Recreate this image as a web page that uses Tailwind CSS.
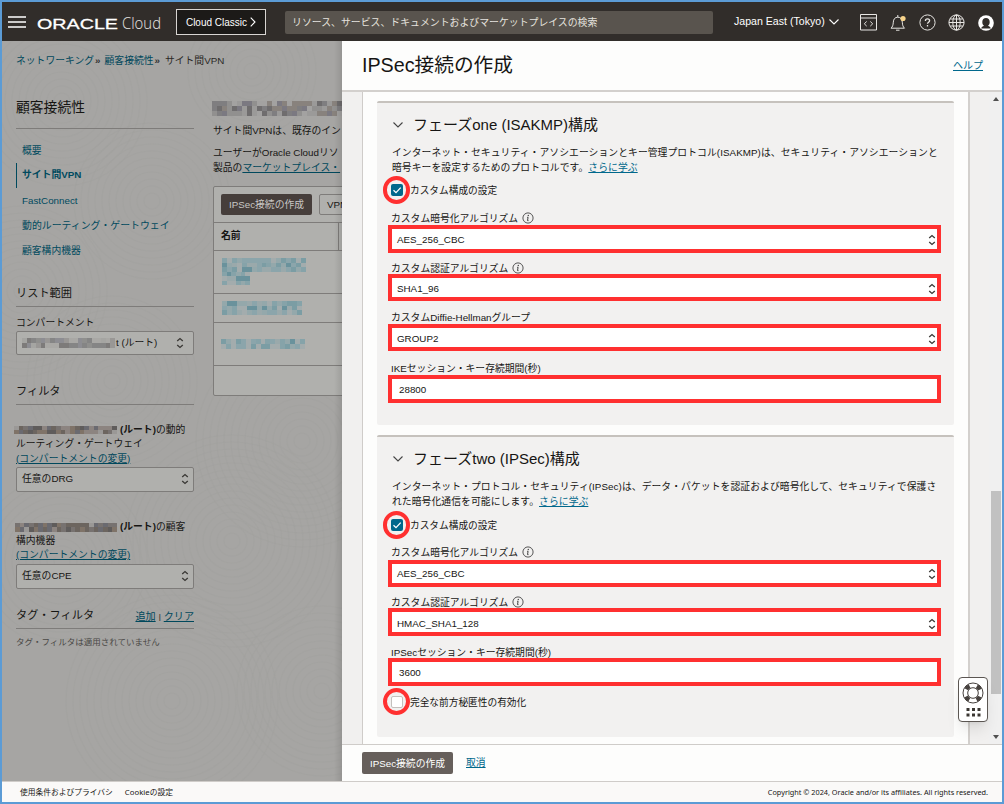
<!DOCTYPE html>
<html lang="ja">

<head>
    <meta charset="UTF-8">
    <meta name="viewport" content="width=device-width, initial-scale=1.0">
    <title>IPSec接続の作成 - Oracle Cloud</title>
    <script src="https://cdn.jsdelivr.net/npm/@tailwindcss/browser@4"></script>
</head>

<body class="w-[1004px] h-[804px] overflow-hidden border-2 border-[#5b9bd5] bg-white font-['Liberation_Sans','Noto_Sans_CJK_JP',sans-serif] text-[9.8px] leading-[15px] text-[#161513] whitespace-nowrap flex flex-col">
    <!-- Shared icons -->
    <svg class="hidden">
        <symbol id="updown" viewBox="0 0 8 12">
            <path d="M1.200 4 4 1.500 6.800 4M1.200 8 4 10.500 6.800 8" fill="none" stroke="#3a3835" stroke-width="1.3" />
        </symbol>
        <symbol id="info" viewBox="0 0 12 12">
            <circle cx="6" cy="6" r="5.1" fill="none" stroke="currentColor" stroke-width=".9" />
            <path d="M5.1 5.3h1L5.5 8.6h1" fill="none" stroke="currentColor" stroke-width="1" />
            <circle cx="6.3" cy="3.5" r=".7" fill="currentColor" />
        </symbol>
        <symbol id="chevron" viewBox="0 0 10 6">
            <path d="M.5.5 5 5 9.5.5" fill="none" stroke="currentColor" stroke-width="1.1" />
        </symbol>
        <symbol id="check" viewBox="0 0 12 12">
            <path d="M2.5 6.2 5 8.6l4.7-5" fill="none" stroke="#fff" stroke-width="1.3" />
        </symbol>
    </svg>

    <!-- Top bar -->
    <header class="h-[39px] shrink-0 bg-[#312d2a] text-white flex items-center">
        <svg class="ml-[6px] w-[18px] h-[12px]" viewBox="0 0 18 12">
            <path d="M0 1h18M0 6h18M0 11h18" stroke="#fff" stroke-width="1.6" />
        </svg>
        <div class="ml-[11px] mt-[4px] w-[126px] flex items-center">
            <svg class="w-[82px] h-[18px] shrink-0" viewBox="0 0 82 18">
                <text x="0" y="14" textLength="81" lengthAdjust="spacingAndGlyphs" fill="#fff" stroke="#fff" stroke-width=".3" font-family="Liberation Sans" font-size="15">ORACLE</text>
            </svg>
            <svg class="ml-[3px] w-[44px] h-[22px] shrink-0" viewBox="0 0 44 22">
                <text x="0" y="16" textLength="39" lengthAdjust="spacingAndGlyphs" fill="#e8e6e3" font-family="Open Sans" font-weight="300" font-size="15.5">Cloud</text>
            </svg>
        </div>
        <button class="ml-[13px] w-[90px] h-[26px] border border-[#d8d5d2] bg-[#1c1a18] text-[10px] flex items-center justify-center gap-[3px] mt-[1px]">
            <span>Cloud Classic</span>
            <svg class="w-[6px] h-[10px]" viewBox="0 0 6 10">
                <path d="M.7.7 5 5 .7 9.3" fill="none" stroke="#fff" stroke-width="1.1" />
            </svg>
        </button>
        <div class="ml-[19px] w-[428px] h-[23px] mt-[1px] rounded-[2px] bg-[#59544e] text-[#e6e3df] text-[9.9px] flex items-center pl-[7px]">リソース、サービス、ドキュメントおよびマーケットプレイスの検索</div>
        <div class="ml-[21px] w-[105px] text-[10.6px] flex items-center gap-[4px]">
            <span>Japan East (Tokyo)</span>
            <svg class="w-[10px] h-[6px]"><use href="#chevron" /></svg>
        </div>
        <div class="ml-[21px] flex items-center mt-[2px]">
            <svg class="w-[17px] h-[17px]" viewBox="0 0 17 17" fill="none" stroke="#e8e6e3">
                <path d="M.5.5h16v15.5H.5zM.5 4h16M6.7 7.5 4.3 9.8l2.4 2.3M10.3 7.5l2.4 2.3-2.4 2.3" />
            </svg>
            <svg class="ml-[13px] w-[17px] h-[18px]" viewBox="0 0 17 18" fill="none" stroke="#e8e6e3">
                <path d="M1 14.2h13.5c-1.6-1.5-2-3-2.2-6-.2-3-1.6-5-4.5-5s-4.3 2-4.5 5c-.2 3-.7 4.5-2.3 6zM6 16.2h3.5M7.8 3V1" />
                <circle cx="13" cy="4.5" r="2.6" fill="#f7d38a" stroke="none" />
            </svg>
            <svg class="ml-[12px] w-[17px] h-[17px]" viewBox="0 0 17 17" fill="none" stroke="#e8e6e3">
                <circle cx="8.5" cy="8.5" r="7.6" />
                <path d="M6.4 7c0-1.4.9-2.1 2.1-2.1s2.1.8 2.1 1.9c0 1.3-2.1 1.5-2.1 3M8.5 11v1.4" stroke-width="1.3" />
            </svg>
            <svg class="ml-[12px] w-[17px] h-[17px]" viewBox="0 0 17 17" fill="none" stroke="#e8e6e3">
                <circle cx="8.5" cy="8.5" r="7.6" />
                <ellipse cx="8.5" cy="8.5" rx="3.7" ry="7.6" />
                <path d="M8.5 1v15M1 8.5h15M2 5h13M2 12h13" />
            </svg>
            <svg class="ml-[13px] w-[16px] h-[16px]" viewBox="0 0 16 16">
                <circle cx="8" cy="8" r="7.8" fill="#fff" />
                <path d="M3.2 13.5c.3-1.8 1.5-2.3 2.8-2.8C4.8 9.800 4.300 8.500 4.300 6.900 4.300 4.600 5.800 3.100 8 3.100s3.700 1.500 3.700 3.800c0 1.600-.5 2.900-1.700 3.800 1.300.5 2.500 1 2.800 2.800z" fill="#312d2a" />
            </svg>
        </div>
    </header>

    <main class="h-[740px] shrink-0 flex">
        <!-- Dimmed page behind the drawer -->
        <div class="relative w-[340px] overflow-hidden bg-[#a6a5a3] flex">
            <svg class="absolute inset-0 w-[340px] h-[740px]" id="rings" fill="none" stroke="#a09f9d" stroke-width="1.2"></svg>

            <aside class="relative ml-[14px] w-[178px] flex flex-col">
                <nav class="mt-[12px] h-[15px] flex text-[#00485c]"><span>ネットワーキング</span><b class="ml-[1px] mr-[4px] text-[#333]">»</b><span>顧客接続性</span><b class="ml-[1px] mr-[5px] text-[#333]">»</b><span class="text-[#2a2826]">サイト間VPN</span></nav>
                <h2 class="mt-[28px] h-[33px] border-b border-[#7e7c7a] text-[13.8px] leading-[24px]">顧客接続性</h2>
                <ul class="mt-[9px] text-[#004a5e]">
                    <li class="h-[25px] leading-[25px] pl-[6px]">概要</li>
                    <li class="h-[25px] leading-[23px] pl-[5px] border-l border-[#004a5e] font-bold">サイト間VPN</li>
                    <li class="h-[25px] leading-[26px] pl-[6px]">FastConnect</li>
                    <li class="h-[25px] leading-[26px] pl-[6px] text-[9.9px]">動的ルーティング・ゲートウェイ</li>
                    <li class="h-[25px] leading-[26px] pl-[6px]">顧客構内機器</li>
                </ul>
                <h3 class="mt-[21px] h-[23px] border-b border-[#7e7c7a] text-[11.2px] leading-[19px]">リスト範囲</h3>
                <label class="mt-[8px] h-[16px] leading-[15px]">コンパートメント</label>
                <div class="h-[24px] rounded-[2px] border border-[#7e7c7a] bg-[#b0b0ad] flex items-center pl-[5px] pr-[9px]">
                    <div class="w-[93px] h-[10px] grid grid-cols-[repeat(20,1fr)] grid-rows-2" data-mosaic="grey" data-cells="40"></div>
                    <span class="ml-[1px] -mt-[1px]">t (ルート)</span>
                    <svg class="ml-auto w-[8px] h-[12px]"><use href="#updown" /></svg>
                </div>
                <h3 class="mt-[27px] h-[23px] border-b border-[#7e7c7a] text-[11.2px] leading-[18px]">フィルタ</h3>
                <div class="mt-[18px] leading-[14.3px]">
                    <div class="flex items-center -ml-[2px] gap-[3px]">
                        <div class="w-[103px] h-[8px] grid grid-cols-[repeat(22,1fr)] grid-rows-2" data-mosaic="brown" data-cells="44"></div><span><b>(ルート)</b>の動的</span>
                    </div>
                    <div>ルーティング・ゲートウェイ</div>
                    <a class="block underline text-[#00485c]">(コンパートメントの変更)</a>
                </div>
                <div class="mt-[1px] h-[25px] rounded-[2px] border border-[#7e7c7a] bg-[#b0b0ad] flex items-center pl-[5px] pr-[4px]">
                    <span class="-mt-[2px]">任意のDRG</span>
                    <svg class="ml-auto w-[8px] h-[12px]"><use href="#updown" /></svg>
                </div>
                <div class="mt-[28px] leading-[14.3px]">
                    <div class="flex items-center -ml-[1px] gap-[3px]">
                        <div class="w-[102px] h-[9px] grid grid-cols-[repeat(22,1fr)] grid-rows-2" data-mosaic="brown" data-cells="44"></div><span><b>(ルート)</b>の顧客</span>
                    </div>
                    <div>構内機器</div>
                    <a class="block underline text-[#00485c]">(コンパートメントの変更)</a>
                </div>
                <div class="mt-[1px] h-[25px] rounded-[2px] border border-[#7e7c7a] bg-[#b0b0ad] flex items-center pl-[5px] pr-[4px]">
                    <span class="-mt-[2px]">任意のCPE</span>
                    <svg class="ml-auto w-[8px] h-[12px]"><use href="#updown" /></svg>
                </div>
                <div class="mt-[17px] h-[23px] border-b border-[#7e7c7a] flex justify-between">
                    <h3 class="text-[11.2px] leading-[18px]">タグ・フィルタ</h3>
                    <div class="leading-[22px] flex text-[10.1px]"><a class="underline text-[#00485c]">追加</a><span class="mx-[3px] text-[8px]">|</span><a class="underline text-[#00485c]">クリア</a></div>
                </div>
                <p class="mt-[6px] text-[#4a4846] text-[8.5px]">タグ・フィルタは適用されていません</p>
            </aside>

            <section class="relative ml-[19px] w-[129px] flex flex-col">
                <div class="-ml-[1px] mt-[60px] w-[130px] h-[15px] shrink-0 grid grid-cols-[repeat(26,1fr)] grid-rows-3" data-mosaic="title" data-cells="78"></div>
                <p class="mt-[7px]">サイト間VPNは、既存のイン</p>
                <p class="mt-[8px] leading-[14.5px]">ユーザーがOracle Cloudリソ<br>製品の<a class="underline text-[#00485c]">マーケットプレイス・</a></p>
                <div class="mt-[11px] w-[150px] h-[210px] shrink-0 rounded-[2px] border border-[#7e7c7a] bg-[#b0b0ad] flex flex-col">
                    <div class="h-[35px] pl-[7px] flex items-center gap-[7px] shrink-0">
                        <button class="w-[91px] h-[21px] shrink-0 rounded-[2px] bg-[#463e3b] text-[#c8c6c4]">IPSec接続の作成</button>
                        <button class="w-[60px] h-[21px] shrink-0 rounded-[2px] border border-[#7e7c7a] text-left pl-[7px]">VPN</button>
                    </div>
                    <div class="h-[29px] border-y border-[#7e7c7a] flex shrink-0 font-bold leading-[26px]">
                        <div class="w-[125px] pl-[7px] border-r border-[#7e7c7a]">名前</div>
                    </div>
                    <div class="h-[43px] border-b border-[#7e7c7a] pl-[8px] pt-[7px] shrink-0">
                        <div class="w-[84px] h-[14px] grid grid-cols-[repeat(17,1fr)] grid-rows-3" data-mosaic="teal" data-cells="51"></div>
                        <div class="w-[28px] h-[13px] grid grid-cols-6 grid-rows-3" data-mosaic="teal" data-cells="18"></div>
                    </div>
                    <div class="h-[29px] border-b border-[#7e7c7a] pl-[8px] flex items-center shrink-0">
                        <div class="w-[80px] h-[14px] grid grid-cols-[repeat(16,1fr)] grid-rows-3" data-mosaic="teal" data-cells="48"></div>
                    </div>
                    <div class="h-[43px] border-b border-[#7e7c7a] pl-[7px] flex items-center shrink-0">
                        <div class="w-[84px] h-[10px] grid grid-cols-[repeat(17,1fr)] grid-rows-2" data-mosaic="teal" data-cells="34"></div>
                    </div>
                </div>
            </section>
            <div class="absolute right-0 top-0 w-[8px] h-full bg-linear-to-r from-transparent to-black/10"></div>
        </div>

        <!-- Drawer -->
        <div class="relative w-[660px] bg-[#fdfdfc] flex flex-col">
            <div class="h-[51px] shrink-0 border-b-2 border-[#d3d0cd] flex items-center justify-between pl-[20px] pr-[19px]">
                <h1 class="text-[19.7px]">IPSec接続の作成</h1>
                <a class="underline text-[#00688c] text-[10px]">ヘルプ</a>
            </div>
            <div class="h-[652px] shrink-0 flex">
                <div class="w-[21px] bg-[#f1f0ef] border-r border-[#cfccc9]"></div>
                <div class="w-[605px] pl-[14px] pr-[14px] pt-[9px]">
                    <!-- Phase one -->
                    <section class="h-[324px] border-t-2 border-[#c6c2bd] bg-[#f2f1f0] rounded-[2px] pl-[11px] pr-[13px]">
                        <h2 class="h-[43px] flex items-center gap-[10px] pl-[5px] text-[15px]"><svg class="w-[10px] h-[6px] text-[#444]"><use href="#chevron" /></svg><span>フェーズone (ISAKMP)構成</span></h2>
                        <p class="pl-[4px] h-[29px] leading-[14.5px] tracking-[0.07px]">インターネット・セキュリティ・アソシエーションとキー管理プロトコル(ISAKMP)は、セキュリティ・アソシエーションと<br>暗号キーを設定するためのプロトコルです。<a class="underline text-[#00688c]">さらに学ぶ</a></p>
                        <label class="h-[30px] flex items-center gap-[7px] pl-[3px]">
                            <span class="relative w-[12px] h-[12px] rounded-[2px] bg-[#00688c]"><svg class="w-[12px] h-[12px]"><use href="#check" /></svg><i class="absolute -left-[8px] -top-[8px] w-[27px] h-[28px] rounded-full border-4 border-[#ff3030]"></i></span>
                            <span class="text-[9.7px]">カスタム構成の設定</span>
                        </label>
                        <div class="h-[20px] pl-[3px] pt-[6px] flex items-center gap-[4px]"><span>カスタム暗号化アルゴリズム</span><svg class="w-[12px] h-[12px] text-[#444]"><use href="#info" /></svg></div>
                        <div class="h-[28px] border-4 border-[#ff3030] bg-white flex items-center justify-between pl-[5px] pr-[1px]"><span>AES_256_CBC</span><svg class="w-[8px] h-[12px] mt-[1px]"><use href="#updown" /></svg></div>
                        <div class="h-[21px] pl-[3px] pt-[9px] flex items-center gap-[4px]"><span>カスタム認証アルゴリズム</span><svg class="w-[12px] h-[12px] text-[#444]"><use href="#info" /></svg></div>
                        <div class="h-[27px] border-4 border-[#ff3030] bg-white flex items-center justify-between pl-[5px] pr-[1px]"><span class="mt-[2px]">SHA1_96</span><svg class="w-[8px] h-[12px] mt-[3px]"><use href="#updown" /></svg></div>
                        <div class="h-[23px] pl-[3px] pt-[10px] flex items-center">カスタムDiffie-Hellmanグループ</div>
                        <div class="h-[27px] border-4 border-[#ff3030] bg-white flex items-center justify-between pl-[5px] pr-[1px]"><span class="mt-[2px]">GROUP2</span><svg class="w-[8px] h-[12px] mt-[3px]"><use href="#updown" /></svg></div>
                        <div class="h-[24px] pl-[3px] pt-[10px] flex items-center">IKEセッション・キー存続期間(秒)</div>
                        <div class="h-[28px] border-4 border-[#ff3030] bg-white flex items-center pl-[7px]">28800</div>
                    </section>

                    <!-- Phase two -->
                    <section class="mt-[10px] h-[302px] border-t-2 border-[#c6c2bd] bg-[#f2f1f0] rounded-[2px] pl-[11px] pr-[13px]">
                        <h2 class="h-[43px] flex items-center gap-[10px] pl-[5px] text-[15px]"><svg class="w-[10px] h-[6px] text-[#444]"><use href="#chevron" /></svg><span>フェーズtwo (IPSec)構成</span></h2>
                        <p class="pl-[4px] h-[30px] leading-[14.5px] tracking-[0.07px]">インターネット・プロトコル・セキュリティ(IPSec)は、データ・パケットを認証および暗号化して、セキュリティで保護さ<br>れた暗号化通信を可能にします。<a class="underline text-[#00688c]">さらに学ぶ</a></p>
                        <label class="h-[30px] flex items-center gap-[7px] pl-[3px]">
                            <span class="relative w-[12px] h-[12px] rounded-[2px] bg-[#00688c]"><svg class="w-[12px] h-[12px]"><use href="#check" /></svg><i class="absolute -left-[8px] -top-[8px] w-[27px] h-[28px] rounded-full border-4 border-[#ff3030]"></i></span>
                            <span class="text-[9.7px]">カスタム構成の設定</span>
                        </label>
                        <div class="h-[20px] pl-[3px] pt-[4px] flex items-center gap-[4px]"><span>カスタム暗号化アルゴリズム</span><svg class="w-[12px] h-[12px] text-[#444]"><use href="#info" /></svg></div>
                        <div class="h-[27px] border-4 border-[#ff3030] bg-white flex items-center justify-between pl-[5px] pr-[1px]"><span>AES_256_CBC</span><svg class="w-[8px] h-[12px] mt-[1px]"><use href="#updown" /></svg></div>
                        <div class="h-[21px] pl-[3px] pt-[9px] flex items-center gap-[4px]"><span>カスタム認証アルゴリズム</span><svg class="w-[12px] h-[12px] text-[#444]"><use href="#info" /></svg></div>
                        <div class="h-[28px] border-4 border-[#ff3030] bg-white flex items-center justify-between pl-[5px] pr-[1px]"><span class="mt-[2px]">HMAC_SHA1_128</span><svg class="w-[8px] h-[12px] mt-[3px]"><use href="#updown" /></svg></div>
                        <div class="h-[22px] pl-[3px] pt-[10px] flex items-center">IPSecセッション・キー存続期間(秒)</div>
                        <div class="h-[28px] border-4 border-[#ff3030] bg-white flex items-center pl-[7px]">3600</div>
                        <label class="h-[32px] flex items-center gap-[7px] pl-[3px]">
                            <span class="relative w-[12px] h-[12px] rounded-[2px] border border-[#c4c1be] bg-white"><i class="absolute -left-[9px] -top-[9px] w-[27px] h-[27px] rounded-full border-4 border-[#ff3030]"></i></span>
                            <span class="text-[9.7px]">完全な前方秘匿性の有効化</span>
                        </label>
                    </section>
                </div>
                <div class="w-[21px] bg-[#f1f0ef] border-l-2 border-[#d3d0cd]"></div>
                <!-- Scrollbar -->
                <div class="w-[13px] bg-[#f0f0f0] flex flex-col items-center">
                    <svg class="mt-[5px] w-[6px] h-[4px] mb-[390px]" viewBox="0 0 6 4"><path d="M0 4 3 0l3 4z" fill="#505050" /></svg>
                    <div class="w-[10px] h-[203px] bg-[#c1c1c1]"></div>
                    <svg class="mt-auto mb-[5px] w-[6px] h-[4px]" viewBox="0 0 6 4"><path d="M0 0h6L3 4z" fill="#505050" /></svg>
                </div>
            </div>
            <div class="grow border-t border-[#cfccc9] flex items-center pl-[20px] gap-[13px]">
                <button class="w-[91px] h-[22px] rounded-[2px] bg-[#665f5b] text-white">IPSec接続の作成</button>
                <a class="underline text-[#00688c] -mt-[2px]">取消</a>
            </div>

            <!-- Floating support widget -->
            <div class="absolute left-[616px] top-[636px] w-[30px] h-[45px] rounded-[4px] border border-[#5b5652] bg-white shadow-lg flex flex-col items-center pt-[4px]">
                <svg class="w-[22px] h-[22px]" viewBox="0 0 22 22" fill="none" stroke="#46413e">
                    <circle cx="11" cy="11" r="10" />
                    <circle cx="11" cy="11" r="5.300" />
                    <circle cx="11" cy="11" r="7.700" stroke-width="4.200" stroke-dasharray="4.600 7.495" stroke-dashoffset="-3.750" />
                </svg>
                <svg class="mt-[4px] w-[15px] h-[9px]" viewBox="0 0 15 9">
                    <path d="M.5 0h3v3h-3zM6 0h3v3H6zM11.500 0h3v3h-3zM.5 5.500h3v3h-3zM6 5.500h3v3H6zM11.500 5.500h3v3h-3z" fill="#3a3632" />
                </svg>
            </div>
        </div>
    </main>

    <footer class="grow border-t border-[#cfccc9] bg-[#faf9f8] flex items-center justify-between pl-[18px] pr-[14px] text-[7.75px] font-['Noto_Sans','Noto_Sans_CJK_JP',sans-serif]">
        <div class="flex gap-[12px]"><span>使用条件およびプライバシ</span><span>Cookieの設定</span></div>
        <span class="text-[7.3px]">Copyright © 2024, Oracle and/or its affiliates. All rights reserved.</span>
    </footer>

    <script>
        // Pixelated blocks that cover account specific names
        const palettes = {
            grey: ['#a5a5a2', '#8f8f8d', '#858585', '#999795', '#a9a8a5', '#8d8d92', '#7d7b7a'],
            brown: ['#777270', '#6a6a70', '#8c8480', '#5f5c5b', '#7f7368', '#9a9896', '#6c655f'],
            title: ['#a3a2a1', '#7f7e80', '#6f6d6e', '#91908f', '#7b7981', '#9b9a99', '#88827d'],
            teal: ['#8ba5ab', '#7b9da4', '#9aa9ab', '#6a929c', '#a3acad', '#86a3a9', '#94a8ab']
        };

        // Small seeded generator keeps the blocks the same on every load
        let seed = 7;
        function next() {
            seed = (seed * 16807) % 2147483647;
            return seed / 2147483647;
        }

        document.querySelectorAll('[data-mosaic]').forEach(box => {
            const colors = palettes[box.dataset.mosaic];
            for (let i = 0; i < Number(box.dataset.cells); i++) {
                const cell = document.createElement('div');
                cell.style.background = colors[Math.floor(next() * colors.length)];
                box.appendChild(cell);
            }
        });

        // Faint ring texture of the page background
        const centers = [[60, 60, 90], [250, 30, 70], [150, 160, 80], [20, 250, 90], [300, 400, 110], [110, 340, 90], [230, 500, 110], [60, 520, 90], [170, 660, 110], [320, 650, 90]];
        let rings = '';
        centers.forEach(([x, y, max]) => {
            for (let r = 8; r < max; r += 7) {
                rings += `<circle cx="${x}" cy="${y}" r="${r}" opacity=".4"/>`;
            }
        });
        document.getElementById('rings').innerHTML = rings;
    </script>
</body>

</html>
